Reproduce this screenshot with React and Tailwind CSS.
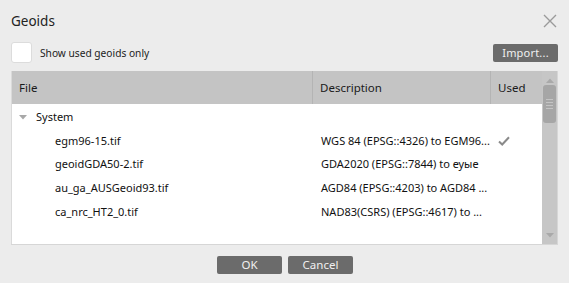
import React from "react";

const rows = [
  { file: "egm96-15.tif", desc: "WGS 84 (EPSG::4326) to EGM96...", used: true },
  { file: "geoidGDA50-2.tif", desc: "GDA2020 (EPSG::7844) to еуые", used: false },
  { file: "au_ga_AUSGeoid93.tif", desc: "AGD84 (EPSG::4203) to AGD84 ...", used: false },
  { file: "ca_nrc_HT2_0.tif", desc: "NAD83(CSRS) (EPSG::4617) to ...", used: false },
];

const font = { fontFamily: '"Noto Sans", "Open Sans", sans-serif' };

export default function App() {
  return (
    <div
      className="w-[569px] h-[283px] bg-[#ececec] flex flex-col px-[11px] text-[#1a1a1a] overflow-hidden"
      style={font}
    >
      {/* Title */}
      <div className="flex items-center justify-between h-[20px] mt-[11px]">
        <span className="text-[13.5px] leading-[20px] text-[#222]">Geoids</span>
        <svg width="14" height="14" viewBox="0 0 14 14" className="mr-[1px]">
          <path d="M1 1 L13 13 M13 1 L1 13" stroke="#9a9a9a" strokeWidth="1.4" />
        </svg>
      </div>

      {/* Checkbox row */}
      <div className="flex items-center justify-between h-[21px] mt-[11px]">
        <div className="flex items-center">
          <div className="w-[21px] h-[21px] bg-white border border-[#dcdcdc] rounded-[3px]" />
          <span className="ml-[8px] text-[10.2px] leading-[14px] text-[#222]">Show used geoids only</span>
        </div>
        <button className="w-[65px] h-[18px] bg-[#6b6b6b] rounded-[2px] text-[11px] leading-[18px] text-[#f0f0f0] tracking-[0.2px]">
          Import...
        </button>
      </div>

      {/* Table */}
      <div className="mt-[8px] h-[174px] flex border-r border-b border-[#d6d6d6] bg-white">
        <div className="flex-1 flex flex-col border-l border-[#dadada]">
          <div className="flex h-[33px] bg-[#c4c4c4] text-[11.5px] text-[#1a1a1a]">
            <div className="w-[301px] flex items-center pl-[7px] border-r border-[#b4b4b4]">File</div>
            <div className="w-[178px] flex items-center pl-[7px] border-r border-[#b4b4b4]">Description</div>
            <div className="flex-1 flex items-center pl-[7px]">Used</div>
          </div>
          <div className="flex-1 bg-white text-[11px] text-[#111]">
            <div className="flex items-center h-[24px] mt-[1px]">
              <svg width="8" height="5" viewBox="0 0 8 5" className="ml-[7px]">
                <path d="M0 0 L8 0 L4 4.5 Z" fill="#a8a8a8" />
              </svg>
              <span className="ml-[9px]">System</span>
            </div>
            {rows.map((r) => (
              <div key={r.file} className="flex items-center h-[23.7px]">
                <div className="w-[302px] pl-[43px]">{r.file}</div>
                <div className="w-[178px] pl-[7px] whitespace-nowrap overflow-hidden">{r.desc}</div>
                <div className="flex-1 pl-[6px] flex items-center">
                  {r.used && (
                    <svg width="12" height="10" viewBox="0 0 12 10">
                      <path d="M1 5.5 L4.2 8.5 L11 1.2" stroke="#8a8a8a" strokeWidth="2" fill="none" />
                    </svg>
                  )}
                </div>
              </div>
            ))}
          </div>
        </div>
        {/* Scrollbar */}
        <div className="w-[15px] bg-[#c6c6c6] flex flex-col items-center">
          <svg width="8" height="5" viewBox="0 0 8 5" className="mt-[7px]">
            <path d="M0 5 L8 5 L4 0.5 Z" fill="#a9a9a9" />
          </svg>
          <div className="mt-[2px] w-[13px] h-[38px] bg-[#a6a6a6] rounded-[3px] flex flex-col items-center justify-center gap-[2px]">
            <div className="w-[7px] h-[1px] bg-[#c4c4c4]" />
            <div className="w-[7px] h-[1px] bg-[#c4c4c4]" />
            <div className="w-[7px] h-[1px] bg-[#c4c4c4]" />
            <div className="w-[7px] h-[1px] bg-[#c4c4c4]" />
          </div>
          <div className="flex-1" />
          <svg width="8" height="5" viewBox="0 0 8 5" className="mb-[6px]">
            <path d="M0 0 L8 0 L4 4.5 Z" fill="#a9a9a9" />
          </svg>
        </div>
      </div>

      {/* Buttons */}
      <div className="flex justify-center gap-[6px] mt-[11px] pl-[1px]">
        <button className="w-[65px] h-[18px] bg-[#6b6b6b] rounded-[2px] text-[11.5px] leading-[18px] text-[#f0f0f0]">OK</button>
        <button className="w-[65px] h-[18px] bg-[#6b6b6b] rounded-[2px] text-[11.5px] leading-[18px] text-[#f0f0f0]">Cancel</button>
      </div>
    </div>
  );
}
